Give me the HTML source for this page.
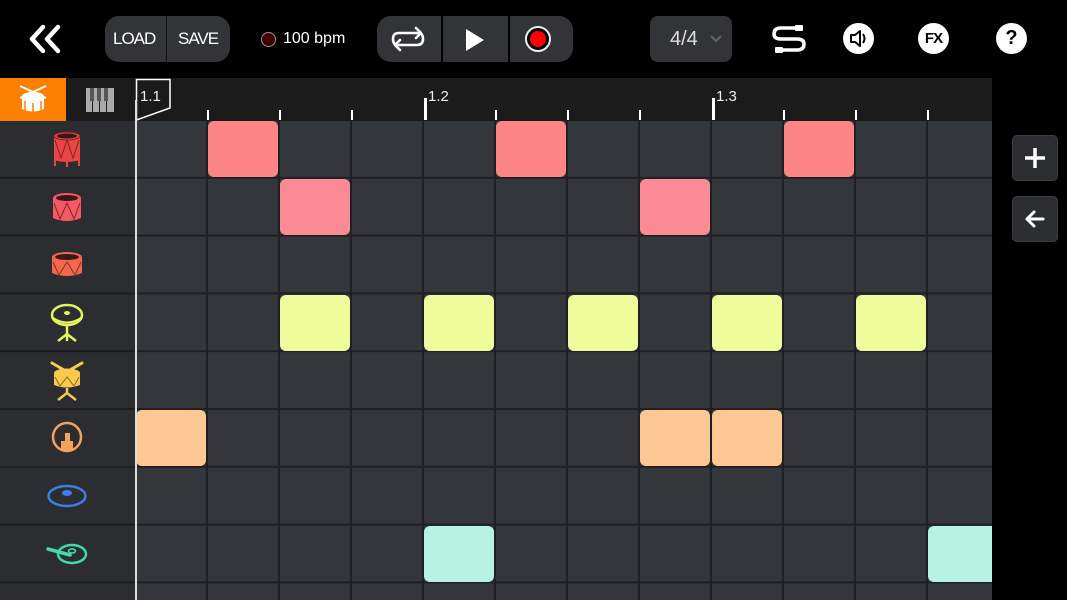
<!DOCTYPE html>
<html><head><meta charset="utf-8">
<style>
*{margin:0;padding:0;box-sizing:border-box}
body{width:1067px;height:600px;background:#000;overflow:hidden;position:relative;font-family:"Liberation Sans",sans-serif;color:#fff}
.a{position:absolute}
.btn{background:#333437;border-radius:10px}
.n{position:absolute;width:70px;height:56px;border-radius:6px}
.tk{position:absolute;top:110px;width:2px;height:10px;background:#fff}
.lbl{position:absolute;top:88px;font-size:15px;color:#eee}
</style></head><body>
<!-- back -->
<svg class="a" style="left:27px;top:24px" width="36" height="30" viewBox="0 0 36 30"><path d="M16 3 L5 15 L16 27 M31 3 L20 15 L31 27" stroke="#fff" stroke-width="4.5" fill="none" stroke-linecap="round" stroke-linejoin="round"/></svg>
<!-- load/save -->
<div class="a btn" style="left:105px;top:16px;width:125px;height:46px;border-radius:14px"></div>
<div class="a" style="left:166px;top:16px;width:1px;height:46px;background:#111"></div>
<div class="a" style="left:113px;top:29px;font-size:17px;letter-spacing:-1px">LOAD</div>
<div class="a" style="left:178px;top:29px;font-size:17px;letter-spacing:-1px">SAVE</div>
<div class="a" style="left:261px;top:32px;width:15px;height:15px;border-radius:50%;background:radial-gradient(#5a0000,#200);border:1.5px solid #999"></div>
<div class="a" style="left:283px;top:30px;font-size:16px">100 bpm</div>
<!-- transport -->
<div class="a btn" style="left:377px;top:16px;width:196px;height:46px;border-radius:14px"></div>
<div class="a" style="left:441px;top:16px;width:2px;height:46px;background:#000"></div>
<div class="a" style="left:508px;top:16px;width:2px;height:46px;background:#000"></div>
<svg class="a" style="left:390px;top:25px" width="36" height="28" viewBox="0 0 36 28"><path d="M8 20 Q3 20 3 14 Q3 8 9 8 L30 8 M26 3 L31 8 L26 13 M28 8 Q33 8 33 14 Q33 20 27 20 L6 20 M10 15 L5 20 L10 25" stroke="#fff" stroke-width="2.6" fill="none" stroke-linecap="round" stroke-linejoin="round"/></svg>
<svg class="a" style="left:464px;top:27px" width="22" height="26" viewBox="0 0 22 26"><path d="M2 2 L20 13 L2 24 Z" fill="#fff"/></svg>
<div class="a" style="left:525px;top:26px;width:26px;height:26px;border-radius:50%;border:2px solid #eee;background:#000"></div>
<div class="a" style="left:530px;top:31px;width:16px;height:16px;border-radius:50%;background:#f00"></div>
<!-- 4/4 -->
<div class="a btn" style="left:650px;top:16px;width:82px;height:46px;border-radius:8px"></div>
<div class="a" style="left:670px;top:28px;font-size:20px;color:#ddd">4/4</div>
<svg class="a" style="left:710px;top:35px" width="12" height="8"><path d="M1 1 L6 6 L11 1" stroke="#666" stroke-width="2" fill="none"/></svg>
<!-- cable -->
<svg class="a" style="left:771px;top:24px" width="36" height="30" viewBox="0 0 36 30"><path d="M10 4 L24 4 M10 4 Q3 4 3 10 Q3 15 10 15 L26 15 Q33 15 33 20 Q33 26 26 26 L12 26" stroke="#fff" stroke-width="3.5" fill="none" stroke-linecap="round"/><rect x="24" y="1" width="8" height="6" rx="1" fill="#fff"/><rect x="4" y="23" width="8" height="6" rx="1" fill="#fff"/></svg>
<!-- speaker -->
<div class="a" style="left:843px;top:23px;width:31px;height:31px;border-radius:50%;background:#fff"></div>
<svg class="a" style="left:843px;top:23px" width="31" height="31" viewBox="0 0 31 31"><path d="M8 12 L12 12 L17 8 L17 23 L12 19 L8 19 Z" stroke="#000" stroke-width="2" fill="none" stroke-linejoin="round"/><path d="M20 11 Q23 15.5 20 20" stroke="#000" stroke-width="2" fill="none"/></svg>
<div class="a" style="left:918px;top:23px;width:31px;height:31px;border-radius:50%;background:#fff;color:#000;font-size:15px;font-weight:bold;text-align:center;line-height:31px;letter-spacing:-1px">FX</div>
<div class="a" style="left:996px;top:23px;width:31px;height:31px;border-radius:50%;background:#fff;color:#000;font-size:20px;font-weight:bold;text-align:center;line-height:31px">?</div>
<!-- ruler -->
<div class="a" style="left:0;top:78px;width:992px;height:43px;background:#1b1b1c"></div>
<div class="a" style="left:0;top:78px;width:66px;height:43px;background:#fb7f00"></div>
<svg class="a" style="left:17px;top:84px" width="32" height="30" viewBox="0 0 32 30"><path d="M3 2 L29 14 M29 2 L3 14" stroke="#fff" stroke-width="2"/><ellipse cx="16" cy="12" rx="11" ry="4" fill="#fff"/><path d="M5 13 L5 25 Q16 30 27 25 L27 13 Q16 18 5 13Z" fill="#fff"/><path d="M8 17 L8 26 M16 19 L16 28 M24 17 L24 26" stroke="#fb7f00" stroke-width="1.5"/></svg>
<svg class="a" style="left:85px;top:88px" width="30" height="24" viewBox="0 0 30 24"><g fill="#aaa"><rect x="1" y="0" width="6" height="24"/><rect x="8" y="0" width="6" height="24"/><rect x="15" y="0" width="6" height="24"/><rect x="22" y="0" width="7" height="24"/></g><g fill="#555"><rect x="5" y="0" width="4" height="13"/><rect x="12" y="0" width="4" height="13"/><rect x="19" y="0" width="4" height="13"/></g></svg>
<div class="tk" style="left:207px"></div><div class="tk" style="left:279px"></div><div class="tk" style="left:351px"></div>
<div class="tk" style="left:424px;top:98px;height:22px;width:3px"></div>
<div class="tk" style="left:495px"></div><div class="tk" style="left:567px"></div><div class="tk" style="left:639px"></div>
<div class="tk" style="left:712px;top:98px;height:22px;width:3px"></div>
<div class="tk" style="left:783px"></div><div class="tk" style="left:855px"></div><div class="tk" style="left:927px"></div>
<svg class="a" style="left:135px;top:78px" width="38" height="43"><path d="M1.5 1.5 L35 1.5 L35 30 L1.5 42 Z" fill="#1b1b1c" stroke="#fff" stroke-width="1.5"/></svg>
<div class="lbl" style="left:140px">1.1</div>
<div class="lbl" style="left:428px">1.2</div>
<div class="lbl" style="left:716px">1.3</div>
<!-- left column -->
<svg class="a" style="left:0;top:121px" width="135" height="479"><defs><pattern id="r" width="135" height="57.8" patternUnits="userSpaceOnUse" y="0"><rect width="135" height="57.8" fill="#1c1d20"/><rect y="0" width="135" height="55.8" fill="#2b2d31"/></pattern></defs><rect width="135" height="479" fill="url(#r)"/></svg>
<!-- grid -->
<svg class="a" style="left:136px;top:121px" width="856" height="479"><defs><pattern id="g" width="72" height="57.8" patternUnits="userSpaceOnUse"><rect width="72" height="57.8" fill="#1e2023"/><rect x="0" y="0" width="70" height="55.8" fill="#33363b"/></pattern></defs><rect width="856" height="479" fill="url(#g)"/></svg>
<!-- notes -->
<div class="n" style="left:208px;top:121px;background:#fd8585"></div>
<div class="n" style="left:496px;top:121px;background:#fd8585"></div>
<div class="n" style="left:784px;top:121px;background:#fd8585"></div>
<div class="n" style="left:280px;top:179px;background:#fc8b95"></div>
<div class="n" style="left:640px;top:179px;background:#fc8b95"></div>
<div class="n" style="left:280px;top:294.5px;background:#eefc9c"></div>
<div class="n" style="left:424px;top:294.5px;background:#eefc9c"></div>
<div class="n" style="left:568px;top:294.5px;background:#eefc9c"></div>
<div class="n" style="left:712px;top:294.5px;background:#eefc9c"></div>
<div class="n" style="left:856px;top:294.5px;background:#eefc9c"></div>
<div class="n" style="left:136px;top:410px;background:#fec894"></div>
<div class="n" style="left:640px;top:410px;background:#fec894"></div>
<div class="n" style="left:712px;top:410px;background:#fec894"></div>
<div class="n" style="left:424px;top:525.6px;background:#b6f3e3"></div>
<div class="n" style="left:928px;top:525.6px;width:64px;border-radius:6px 0 0 6px;background:#b6f3e3"></div>
<!-- playhead -->
<div class="a" style="left:135px;top:100px;width:2px;height:500px;background:#ddd"></div>
<!-- icons -->
<svg class="a" style="left:52px;top:130px" width="30" height="38" viewBox="0 0 30 38"><path d="M2 6 L2 30 Q15 34 28 30 L28 6 Z" fill="#e84545"/><ellipse cx="15" cy="6" rx="13" ry="4" fill="#e84545" stroke="#7a1f1f" stroke-width="1"/><ellipse cx="15" cy="6" rx="10" ry="2.5" fill="#3a1515"/><path d="M3 10 L9 28 L15 10 L21 28 L27 10" stroke="#8a2020" fill="none"/><path d="M3 30 L3 36 M15 32 L15 37 M27 30 L27 36" stroke="#e84545" stroke-width="2"/></svg>
<svg class="a" style="left:51px;top:191px" width="32" height="34" viewBox="0 0 32 34"><path d="M2 7 L2 27 Q16 33 30 27 L30 7 Z" fill="#f35a64"/><ellipse cx="16" cy="7" rx="14" ry="5" fill="#f35a64"/><ellipse cx="16" cy="7" rx="11" ry="3" fill="#3b1518"/><path d="M3 12 L9 28 L16 12 L23 28 L29 12" stroke="#8a2028" fill="none"/></svg>
<svg class="a" style="left:50px;top:250px" width="34" height="30" viewBox="0 0 34 30"><path d="M2 7 L2 23 Q17 29 32 23 L32 7 Z" fill="#f2674d"/><ellipse cx="17" cy="7" rx="15" ry="5" fill="#f2674d"/><ellipse cx="17" cy="7" rx="12" ry="3" fill="#3a1a14"/><path d="M3 12 L9 25 L17 12 L25 25 L31 12" stroke="#8a3020" fill="none"/></svg>
<svg class="a" style="left:50px;top:303px" width="34" height="40" viewBox="0 0 34 40"><ellipse cx="17" cy="12" rx="15" ry="10" fill="none" stroke="#e4f55a" stroke-width="2.5"/><ellipse cx="17" cy="10" rx="3" ry="2" fill="#e4f55a"/><path d="M3 15 Q17 24 31 15" stroke="#e4f55a" stroke-width="2" fill="none"/><path d="M17 22 L17 31 L8 38 M17 31 L26 38 M17 31 L17 38" stroke="#e4f55a" stroke-width="2.5" fill="none"/></svg>
<svg class="a" style="left:50px;top:359px" width="34" height="42" viewBox="0 0 34 42"><path d="M2 4 L14 11 M32 4 L20 11" stroke="#f7c94d" stroke-width="3" stroke-linecap="round"/><path d="M4 14 L4 26 Q17 31 30 26 L30 14 Z" fill="#f7c94d"/><ellipse cx="17" cy="14" rx="13" ry="4.5" fill="#f7c94d"/><path d="M5 18 L10 27 L17 18 L24 27 L29 18" stroke="#8a6a20" fill="none"/><path d="M17 29 L17 34 L8 41 M17 34 L26 41" stroke="#f7c94d" stroke-width="2.5" fill="none"/></svg>
<svg class="a" style="left:50px;top:421px" width="34" height="34" viewBox="0 0 34 34"><circle cx="17" cy="16" r="14" fill="none" stroke="#f4a259" stroke-width="2.5"/><rect x="15" y="12" width="5" height="8" fill="#f4a259"/><rect x="11" y="20" width="12" height="10" fill="#f4a259"/></svg>
<svg class="a" style="left:46px;top:483px" width="42" height="26" viewBox="0 0 42 26"><ellipse cx="21" cy="13" rx="18.5" ry="10" fill="none" stroke="#3d7fe6" stroke-width="2.5"/><ellipse cx="21" cy="10" rx="5" ry="3" fill="#3d7fe6"/></svg>
<svg class="a" style="left:45px;top:541px" width="44" height="26" viewBox="0 0 44 26"><ellipse cx="27" cy="13" rx="14" ry="9" fill="none" stroke="#43d9ab" stroke-width="2.5"/><ellipse cx="27" cy="10" rx="3.5" ry="2" fill="none" stroke="#43d9ab" stroke-width="1.5"/><path d="M3 8 L25 14" stroke="#43d9ab" stroke-width="3.5" stroke-linecap="round"/></svg>
<!-- right buttons -->
<div class="a" style="left:1012px;top:135px;width:46px;height:46px;border-radius:5px;background:#2b2d31;border:1px solid #3a3c40"></div>
<svg class="a" style="left:1012px;top:135px" width="46" height="46"><path d="M23 13 L23 33 M13 23 L33 23" stroke="#fff" stroke-width="3.5"/></svg>
<div class="a" style="left:1012px;top:196px;width:46px;height:46px;border-radius:5px;background:#2b2d31;border:1px solid #3a3c40"></div>
<svg class="a" style="left:1012px;top:196px" width="46" height="46"><path d="M31 23 L15 23 M22 16 L15 23 L22 30" stroke="#fff" stroke-width="3" fill="none" stroke-linecap="round" stroke-linejoin="round"/></svg>
</body></html>
